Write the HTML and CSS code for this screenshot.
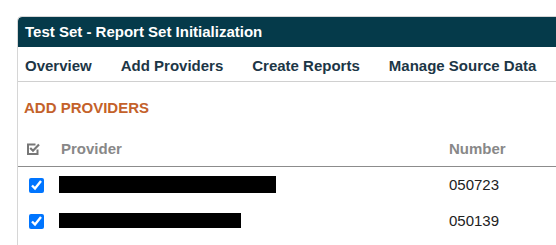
FILE: index.html
```html
<!DOCTYPE html>
<html lang="en">
<head>
  <meta charset="UTF-8" />
  <title>Test Set - Report Set Initialization</title>
  <link rel="stylesheet" href="styles.css">
</head>
<body>
  <div class="panel">
    <div class="panel-title">Test Set - Report Set Initialization</div>

    <nav class="tabs">
      <span>Overview</span>
      <span>Add Providers</span>
      <span>Create Reports</span>
      <span>Manage Source Data</span>
    </nav>

    <div class="panel-body">
      <h2 class="section-title">ADD PROVIDERS</h2>

      <div class="grid-row grid-head">
        <div class="cell-check">
          <svg class="check-all" width="13" height="12" viewBox="0 0 13 12">
            <path d="M8.5 1.5H1V11H10.5V6.5" fill="none" stroke="#777" stroke-width="2"/>
            <path d="M3.2 5L6 7.8L12 1.6" fill="none" stroke="#777" stroke-width="2.2"/>
          </svg>
        </div>
        <div class="cell-provider">Provider</div>
        <div class="cell-number">Number</div>
      </div>

      <div class="grid-row">
        <div class="cell-check"><input type="checkbox" checked></div>
        <div><span class="redacted" style="width: 217px"></span></div>
        <div class="cell-number">050723</div>
      </div>

      <div class="grid-row">
        <div class="cell-check"><input type="checkbox" checked></div>
        <div><span class="redacted short" style="width: 182px"></span></div>
        <div class="cell-number">050139</div>
      </div>
    </div>
  </div>
</body>
</html>
```

FILE: styles.css
```css
html {
  overflow: hidden;
}

body {
  font-family: "Liberation Sans", Arial, sans-serif;
  margin: 0;
  background-color: white;
  color: #222;
}

/* panel is cut off by the window on the right and bottom */
.panel {
  margin: 16px 0 0 17px;
  width: calc(100vw - 18px);
  height: calc(100vh - 17px);
  border: 1px solid #d6d6d6;
  border-right: none;
  border-bottom: none;
  border-top-left-radius: 5px;
  overflow: hidden;
}

.panel-title {
  background-color: #053a4a;
  color: white;
  font-size: 15px;
  font-weight: bold;
  line-height: 30px;
  padding-left: 7px;
  border-top-left-radius: 4px;
}

.tabs {
  display: flex;
  gap: 29px;
  padding: 10px 0 6px 7px;
  line-height: 18px;
  font-size: 15px;
  font-weight: bold;
  color: #1c3646;
  border-bottom: 1px solid #d0d0d0;
}

.section-title {
  margin: 17px 0 0 6px;
  font-size: 15px;
  line-height: 18px;
  font-weight: bold;
  color: #c4612a;
}

.grid-row {
  display: grid;
  grid-template-columns: 41px 390px 1fr;
  align-items: center;
  height: 36px;
  font-size: 15px;
  line-height: 18px;
}

.grid-head {
  height: auto;
  padding: 23px 0 8px;
  font-weight: bold;
  color: #888;
  border-bottom: 1px solid #8c8c8c;
}

.cell-check {
  display: flex;
  align-items: center;
  padding-left: 11px;
}

.check-all {
  margin-left: -2px;
}

.cell-provider {
  padding-left: 2px;
}

input[type="checkbox"] {
  width: 15px;
  height: 15px;
  margin: 0;
}

.redacted {
  display: block;
  height: 17px;
  background-color: black;
  margin-top: -1px;
}

.redacted.short {
  height: 15px;
}
```
